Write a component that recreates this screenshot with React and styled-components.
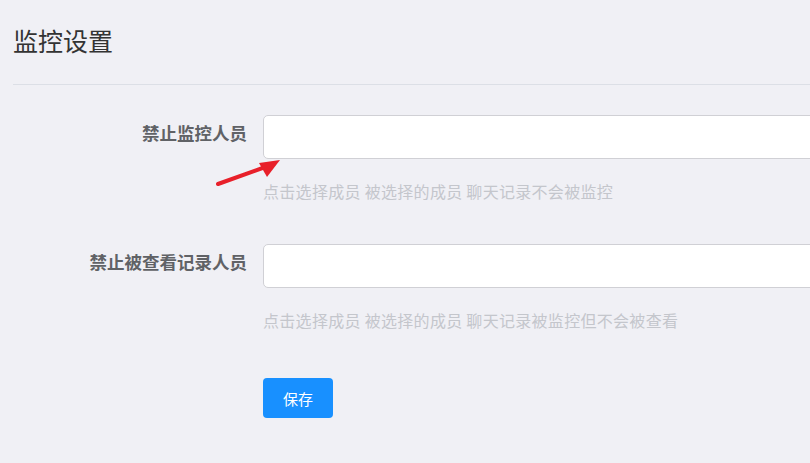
import React from "react";
import styled, { createGlobalStyle } from "styled-components";

const GlobalStyle = createGlobalStyle`
  html, body {
    margin: 0;
    padding: 0;
    background: #f0f0f5;
    overflow: hidden;
  }
  body {
    font-family: "Noto Sans CJK SC", "Noto Sans", sans-serif;
  }
`;

const Page = styled.div`
  position: relative;
  width: 810px;
  height: 463px;
  padding: 0 0 0 13px;
  box-sizing: border-box;
`;

const Title = styled.h2`
  margin: 0;
  padding-top: 22px;
  font-size: 25px;
  line-height: 36px;
  font-weight: normal;
  color: #333;
`;

const Divider = styled.div`
  height: 1px;
  background: #dcdfe6;
  margin-top: 26px;
`;

const Form = styled.form`
  display: flex;
  flex-direction: column;
  padding-top: 30px;
`;

const Row = styled.div`
  display: flex;
  align-items: flex-start;
  margin-bottom: ${(p) => p.gap || 40}px;
`;

const Label = styled.label`
  width: 250px;
  flex-shrink: 0;
  box-sizing: border-box;
  padding-right: 16px;
  text-align: right;
  font-size: 17.5px;
  line-height: 36px;
  font-weight: bold;
  color: #606266;
`;

const Field = styled.div`
  display: flex;
  flex-direction: column;
`;

const Input = styled.input`
  width: 580px;
  height: 44px;
  box-sizing: border-box;
  border: 1px solid #d0d0d5;
  border-radius: 5px;
  background: #fff;
  outline: none;
  padding: 0 15px;
  font-size: 16px;
`;

const Help = styled.div`
  margin-top: 19px;
  font-size: 16px;
  letter-spacing: 0.3px;
  line-height: 26px;
  color: #c4c6cc;
  white-space: nowrap;
`;

const SaveButton = styled.button`
  width: 70px;
  height: 40px;
  border: none;
  border-radius: 4px;
  background: #1890ff;
  color: #fff;
  font-family: inherit;
  font-size: 15px;
  cursor: pointer;
`;

const Arrow = styled.svg`
  position: absolute;
  left: 210px;
  top: 150px;
`;

function App() {
  return (
    <Page>
      <GlobalStyle />
      <Title>监控设置</Title>
      <Divider />
      <Form onSubmit={(e) => e.preventDefault()}>
        <Row>
          <Label>禁止监控人员</Label>
          <Field>
            <Input />
            <Help>点击选择成员 被选择的成员 聊天记录不会被监控</Help>
          </Field>
        </Row>
        <Row gap={45}>
          <Label>禁止被查看记录人员</Label>
          <Field>
            <Input />
            <Help>点击选择成员 被选择的成员 聊天记录被监控但不会被查看</Help>
          </Field>
        </Row>
        <Row>
          <Label />
          <SaveButton type="submit">保存</SaveButton>
        </Row>
      </Form>
      <Arrow width="80" height="45" viewBox="0 0 80 45">
        <line x1="8" y1="34" x2="58" y2="16" stroke="#e8202a" strokeWidth="4" strokeLinecap="round" />
        <polygon points="70,10 49,13 57,27" fill="#e8202a" />
      </Arrow>
    </Page>
  );
}

export default App;
